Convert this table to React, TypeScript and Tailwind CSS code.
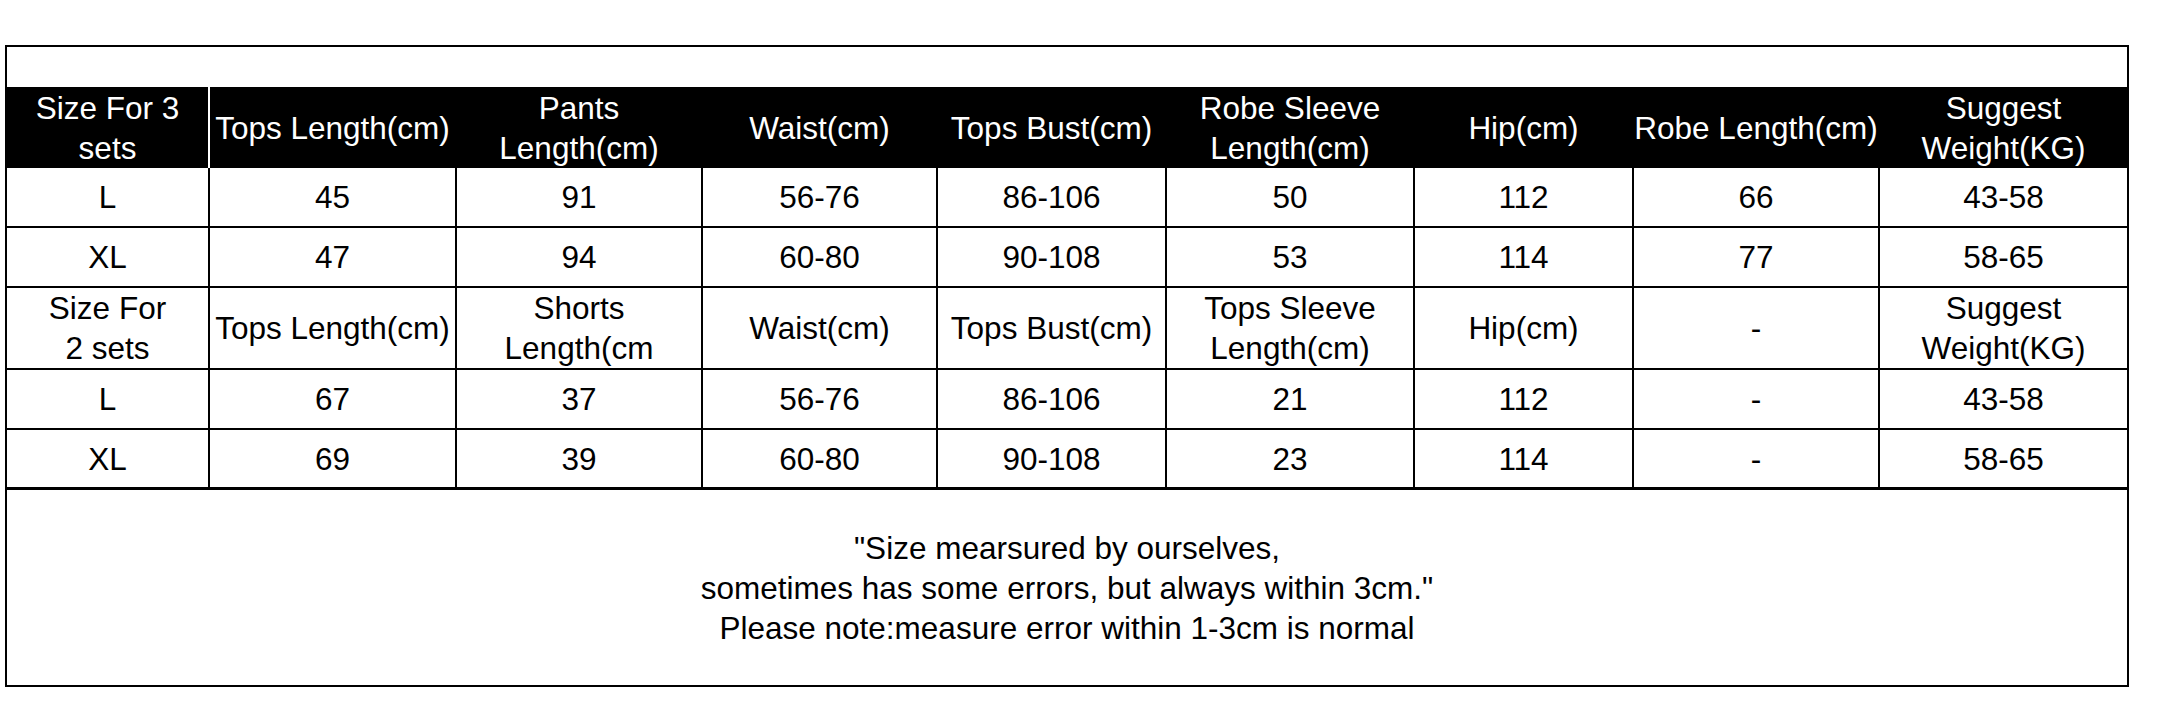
const cols = [
  "w-[203px]",
  "w-[247px]",
  "w-[246px]",
  "w-[235px]",
  "w-[229px]",
  "w-[248px]",
  "w-[219px]",
  "w-[246px]",
  "w-[247px]",
];

type Row = { cells: string[][]; h: string; border: string };

const header = [
  ["Size For 3", "sets"],
  ["Tops Length(cm)"],
  ["Pants", "Length(cm)"],
  ["Waist(cm)"],
  ["Tops Bust(cm)"],
  ["Robe Sleeve", "Length(cm)"],
  ["Hip(cm)"],
  ["Robe Length(cm)"],
  ["Suggest", "Weight(KG)"],
];

const rows: Row[] = [
  {
    cells: [["L"], ["45"], ["91"], ["56-76"], ["86-106"], ["50"], ["112"], ["66"], ["43-58"]],
    h: "h-[60px]",
    border: "border-b-2",
  },
  {
    cells: [["XL"], ["47"], ["94"], ["60-80"], ["90-108"], ["53"], ["114"], ["77"], ["58-65"]],
    h: "h-[60px]",
    border: "border-b-2",
  },
  {
    cells: [
      ["Size For", "2 sets"],
      ["Tops Length(cm)"],
      ["Shorts", "Length(cm"],
      ["Waist(cm)"],
      ["Tops Bust(cm)"],
      ["Tops Sleeve", "Length(cm)"],
      ["Hip(cm)"],
      ["-"],
      ["Suggest", "Weight(KG)"],
    ],
    h: "h-[82px]",
    border: "border-b-2",
  },
  {
    cells: [["L"], ["67"], ["37"], ["56-76"], ["86-106"], ["21"], ["112"], ["-"], ["43-58"]],
    h: "h-[60px]",
    border: "border-b-2",
  },
  {
    cells: [["XL"], ["69"], ["39"], ["60-80"], ["90-108"], ["23"], ["114"], ["-"], ["58-65"]],
    h: "h-[60px]",
    border: "border-b-[3px]",
  },
];

function Cell({ lines, i, dark }: { lines: string[]; i: number; dark?: boolean }) {
  const last = i === cols.length - 1;
  return (
    <div
      className={`${cols[i]} flex shrink-0 flex-col items-center justify-center text-center ${
        last ? "" : "border-r-2"
      } ${dark ? (i === 0 ? "border-white" : "border-black") : "border-black"}`}
    >
      {lines.map((l, k) => (
        <span key={k} className="block whitespace-nowrap">
          {l}
        </span>
      ))}
    </div>
  );
}

export default function App() {
  return (
    <div className="min-h-[719px] w-[2158px] bg-white pl-[5px] pt-[45px] font-['Liberation_Sans',Arial,sans-serif] text-[31.5px] leading-[40px] text-black">
      <div className="w-[2124px] border-2 border-black">
        <div className="h-[40px]" />
        <div className="flex h-[81px] bg-black text-white">
          {header.map((lines, i) => (
            <Cell key={i} lines={lines} i={i} dark />
          ))}
        </div>
        {rows.map((r, ri) => (
          <div key={ri} className={`flex ${r.h} ${r.border} border-black`}>
            {r.cells.map((lines, i) => (
              <Cell key={i} lines={lines} i={i} />
            ))}
          </div>
        ))}
        <div className="flex h-[195px] flex-col items-center justify-center text-center">
          <p>"Size mearsured by ourselves,</p>
          <p>sometimes has some errors, but always within 3cm."</p>
          <p>Please note:measure error within 1-3cm is normal</p>
        </div>
      </div>
    </div>
  );
}
